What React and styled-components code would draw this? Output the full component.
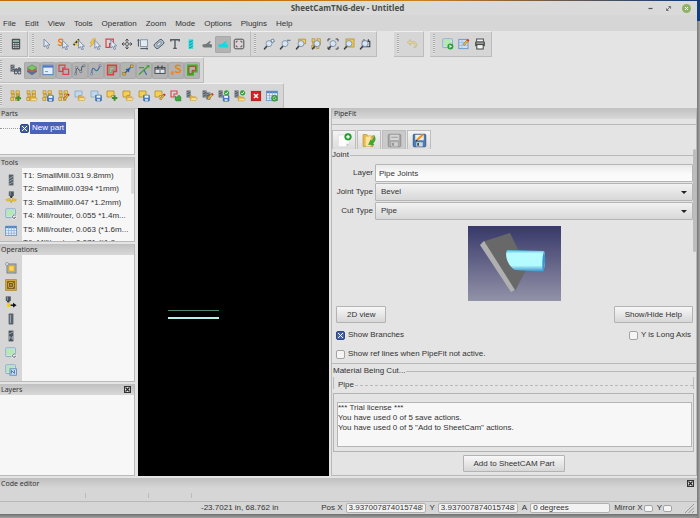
import React from "react";
import styled, { createGlobalStyle, css } from "styled-components";

const Global = createGlobalStyle`
  * { box-sizing: border-box; }
  html, body { margin: 0; height: 100%; overflow: hidden; }
  body { background: #858585; color: #333; font: 8px/10px "Liberation Sans", Arial, sans-serif; }
  button, input, select, textarea { font: inherit; color: inherit; margin: 0; }
  h1, h2, ul, p, fieldset { margin: 0; padding: 0; font: inherit; }
`;

/* ---------- icon pieces, drawn on a 12 x 12 grid ---------- */

const Cursor = ({ x = 0, y = 0 }) => (
  <path transform={`translate(${x} ${y})`} d="M3 1v8l2-1.6L6.3 10.6l1.5-.7L6.4 7h2.5z" fill="#dfe8f3" stroke="#6d7f9c" strokeWidth=".8" />
);
const Lens = () => (
  <g>
    <path d="M4 8L1.6 10.8" stroke="#3c4654" strokeWidth="1.7" strokeLinecap="round" />
    <circle cx="6" cy="5.6" r="3" fill="#d6e5f1" stroke="#7f90a3" strokeWidth=".9" />
  </g>
);
const Folder = ({ x = 0, y = 0 }) => (
  <g transform={`translate(${x} ${y})`}>
    <path d="M.5 5V1h2l.8 1H6v3z" fill="#e8b93f" stroke="#b48a26" strokeWidth=".5" />
    <path d="M.5 5.6L1.8 3H7.6L6.4 5.6z" fill="#ffe391" stroke="#c4982e" strokeWidth=".5" />
  </g>
);
const Disk = ({ x = 0, y = 0 }) => (
  <g transform={`translate(${x} ${y})`}>
    <rect x=".4" y=".4" width="5.8" height="5.8" rx=".6" fill="#4380cc" stroke="#2c5d9a" strokeWidth=".6" />
    <rect x="1.4" y=".7" width="3.8" height="2.2" fill="#f1f5fa" />
    <rect x="1.9" y="4.1" width="2.8" height="2" fill="#cfd8e2" />
  </g>
);
const Pencil = ({ x = 0, y = 0 }) => (
  <g transform={`translate(${x} ${y})`}>
    <path d="M1 6L5.4 1" stroke="#8a6a24" strokeWidth="2.2" />
    <path d="M1.2 5.8L5 1.5" stroke="#f3b53c" strokeWidth="1.4" />
    <path d="M5 1.8L6 .6" stroke="#cf2929" strokeWidth="2" />
  </g>
);
const Plus = ({ x = 0, y = 0, c = "#3f8f28" }) => (
  <path transform={`translate(${x} ${y})`} d="M3 .3v5.4M.3 3h5.4" stroke={c} strokeWidth="2" />
);
const Blocks = ({ c = "#f0c750", s = "#a98734" }) => (
  <g fill={c} stroke={s} strokeWidth=".6">
    <rect x="1" y=".8" width="3" height="3" /><rect x="6" y=".8" width="3.4" height="3" />
    <rect x="1.8" y="4.4" width="3" height="2.6" /><rect x="6.4" y="4.4" width="3" height="2.6" />
    <rect x=".8" y="7.6" width="3" height="3" /><rect x="5.4" y="7.6" width="2.6" height="3" />
  </g>
);
const Part = ({ x = 0, y = 0, c = "#f5cf52", s = "#b38c30" }) => (
  <path transform={`translate(${x} ${y})`} d="M1 1h7v4.5H5.5V7H1z" fill={c} stroke={s} strokeWidth=".8" />
);
const Drill = ({ x = 0, y = 0 }) => (
  <g transform={`translate(${x} ${y})`}>
    <rect x="1" y=".5" width="4" height="7" fill="#59616a" />
    <path d="M1 3l4-2M1 5.5l4-2M1.4 7.6l3.4-1.8" stroke="#a4abb2" strokeWidth=".7" />
  </g>
);
const Check = ({ x = 0, y = 0 }) => (
  <g transform={`translate(${x} ${y})`}>
    <circle cx="2.6" cy="2.6" r="2.6" fill="#31a038" />
    <path d="M1.2 2.6l1.1 1.2L4.2 1.3" fill="none" stroke="#fff" strokeWidth=".9" />
  </g>
);
const Shape = ({ c = "#d8434b" }) => <path d="M1 1.2h7.4v4.4H4.6v3.8H1z" fill="none" stroke={c} strokeWidth="1.2" />;
const Sheet = () => (
  <g>
    <rect x=".8" y=".8" width="9.6" height="8.8" rx=".6" fill="#d5e7f4" stroke="#8aacc4" />
    <rect x="2" y="2" width="7" height="6.4" fill="#b4eab2" />
  </g>
);
const Table = () => (
  <g>
    <rect x=".6" y="1.2" width="10.8" height="9.4" fill="#e8f1fb" stroke="#5d8fc4" strokeWidth=".8" />
    <path d="M.6 2.2h10.8" stroke="#4a83c2" strokeWidth="2" />
    <path d="M.6 5.6h10.8M.6 8.2h10.8M3.6 2v8.6M6.4 2v8.6M9 2v8.6" stroke="#7fa9d6" strokeWidth=".7" />
  </g>
);

const art = {
  calc: <g><rect x="1.8" y=".8" width="8.4" height="10.6" rx=".8" fill="#4c5358" /><rect x="3" y="2" width="6" height="2" fill="#8fb09c" /><path d="M3 5.6h6M3 7.5h6M3 9.4h6" stroke="#c3cac9" strokeWidth="1.1" strokeDasharray="1.5 .7" /></g>,
  cursor: <Cursor />,
  snap: <g><path d="M6 2C4.6.6 1.4 1 1.6 2.9 1.8 4.8 5.4 3.9 5.3 6 5.2 7.8 2 7.8 1 6.4" fill="none" stroke="#f08018" strokeWidth="1.5" /><Cursor x={2.6} y={1.3} /></g>,
  measure: <g><path d="M.6 7L6 1.4" stroke="#3b3b36" strokeWidth="2" /><path d="M1.4 4.8l4 3M4 2.2l3.4 3" stroke="#ecc73c" strokeWidth="1.5" /><Cursor x={2.6} y={1.3} /></g>,
  bolt: <g><path d="M4 .8L1 5h2L1 9l5-5H3.8L7 .8z" fill="#f7cf45" stroke="#c89020" strokeWidth=".5" /><Cursor x={2.8} y={1.3} /></g>,
  shapeCursor: <g><Shape /><Cursor x={2.8} y={1} /></g>,
  move: <g stroke="#4b4f54" fill="none"><path d="M6 1.2v9.6M1.2 6h9.6" /><path d="M4.4 2.6L6 1l1.6 1.6M4.4 9.4L6 11l1.6-1.6M2.6 4.4L1 6l1.6 1.6M9.4 4.4L11 6 9.4 7.6" /><rect x="4.8" y="4.8" width="2.4" height="2.4" fill="#eee" strokeWidth=".7" /></g>,
  scale: <g><rect x="3.4" y="1.8" width="7.2" height="6.6" fill="#e3eaf1" stroke="#72869b" strokeWidth=".8" /><path d="M1.4 1.5v7M3.4 10.6h7.4" stroke="#43515f" strokeWidth="1" /><path d="M.4 2.6l1-1.4 1 1.4M9.6 9.6l1.4 1-1.4 1" fill="none" stroke="#43515f" strokeWidth=".8" /></g>,
  rotate: <g transform="rotate(-40 6 6)"><rect x="1" y="3.2" width="10" height="5.6" rx="1.8" fill="#aebfce" stroke="#4f5b66" strokeWidth=".9" /><rect x="3.4" y="4.9" width="5.2" height="2.2" rx="1" fill="#eff3f6" stroke="#56636f" strokeWidth=".7" /></g>,
  text: <path d="M1.8 3.6V1.8h8.4v1.8M6 1.8v8.6M4.2 10.4h3.6" fill="none" stroke="#555a60" strokeWidth="1.4" />,
  cyanTool: <g><rect x="3.6" y="1.4" width="4.6" height="9.4" fill="#21dfe2" /><path d="M4 4.6l3.6-2M4 7.4l3.6-2M4 10.2l3.6-2" stroke="#167b88" strokeWidth=".8" /></g>,
  hand: <path d="M1 7.4c1-1.4 2.8-1.200 4.400-1.600L8.600 3l1.400.8-1.800 2 2.800.6v3H2.600z" fill="#747a7b" />,
  cyanHand: <path d="M1 7.4c1-1.4 2.8-1.200 4.400-1.600L8.600 3l1.400.8-1.800 2 2.800.6v3H2.600z" fill="#0fdbe4" />,
  frame: <g fill="none" stroke="#4c4c4c"><rect x="1.2" y="1.2" width="9.6" height="9.6" rx="1.6" /><path d="M3.2 4.8V3.2h1.6M7.2 3.2h1.6v1.6M8.8 7.2v1.6H7.2M4.8 8.8H3.2V7.2" strokeWidth=".8" /></g>,
  zoomIn: <g><Lens /><circle cx="9.6" cy="2.8" r="1.6" fill="#e6edf3" stroke="#566f88" strokeWidth=".9" /></g>,
  zoomOut: <g><Lens /><path d="M8 2.4h3.4" stroke="#6b8298" strokeWidth="1.4" /></g>,
  zoomPart: <g><Part x={2.6} y={.2} /><Lens /></g>,
  zoomParts: <g><Blocks /><Lens /></g>,
  zoomFit: <g><path d="M1 3.4V1h2.4M8.6 1H11v2.4M11 8.6V11H8.6M3.4 11H1V8.6" fill="none" stroke="#444" /><Lens /></g>,
  zoomSheet: <g><rect x="3" y="1" width="8" height="8" fill="#f5cb43" stroke="#b38f36" strokeWidth=".8" /><Lens /></g>,
  zoomMachine: <g><path d="M3.4 3.4h7.4v5.4H3.4zM5 3V1.2M9.4 3V1.2" fill="#cdd5da" stroke="#38424b" strokeWidth="1.1" /><Lens /></g>,
  undo: <path d="M4.4 1.6L1.2 4.4 4.4 7.2V5.4c3-.2 4.6 0 4.8 2.2.1 1-.5 1.6-1.6 2 2 .2 3.6-.8 3.4-2.8C10.7 3.9 7.8 3.3 4.4 3.4z" fill="#dfd3a0" stroke="#c2b47c" strokeWidth=".6" />,
  run: <g><Sheet /><circle cx="8.4" cy="8.4" r="3" fill="#27a338" /><path d="M7.5 6.8v3.2l2.5-1.6z" fill="#fff" /></g>,
  editSheet: <g><rect x=".8" y="1.4" width="9.2" height="9.2" fill="#cfe0f3" stroke="#6f99c8" /><path d="M1 4.4h9M1 7.4h9M4 1.5v9" stroke="#98b8dc" strokeWidth=".7" /><Pencil x={4.6} y={1} /></g>,
  print: <g><rect x="2.6" y="1" width="6.8" height="3" fill="#f4f4f4" stroke="#4b5350" /><rect x="1" y="3.6" width="10" height="4.6" rx=".6" fill="#59605c" /><rect x="2.8" y="6.6" width="6.4" height="4.4" fill="#f3f6f1" stroke="#3c4440" /><path d="M2.6 5.2h6.8" stroke="#c9cfca" strokeWidth=".8" /></g>,
  binocs: <g><Drill x={-.5} y={.2} /><path d="M4.5 9.5V5.6l2-1 1 1.4 1.2-2.4 2 .8v5.6H8V8H7v2H4.5z" fill="#5e6b78" stroke="#2c343b" strokeWidth=".6" /><circle cx="6" cy="8.6" r="1" fill="#cbd6df" /><circle cx="9.4" cy="8.6" r="1" fill="#cbd6df" /></g>,
  layers: <g stroke="#555" strokeWidth=".4"><path d="M6 5l5 2.6-5 3.4L1 7.6z" fill="#4777c6" /><path d="M6 3.4L11 6 6 9 1 6z" fill="#dc5550" /><path d="M6 .8l5 3-5 3-5-3z" fill="#6fce5c" /></g>,
  window: <g><rect x=".9" y="1.2" width="10.2" height="9.4" fill="#e3eefb" stroke="#5583c0" /><path d="M1 2.6h10" stroke="#467cc5" strokeWidth="2" /><path d="M3 7.6h3" stroke="#7497c4" /></g>,
  twoShapes: <g fill="none" stroke="#d8434b" strokeWidth="1.2"><path d="M1 1.2h6v3H4.6v3.2H1z" /><rect x="5" y="5.2" width="5.6" height="5.2" /></g>,
  nodes: <g><path d="M1.6 10l1-6.4 4.4 4 1-5.2 2.4-.8" fill="none" stroke="#3c4e63" strokeWidth=".9" /><path d="M.8 9h1.8v1.8H.8zM1.800 2.800h1.800v1.800H1.800zM6 6.800h1.800v1.800H6zM9.200.8H11v1.800H9.200z" fill="#eef1f4" stroke="#4a5b6c" strokeWidth=".6" /></g>,
  curve: <g><path d="M1.600 10C2 3 3.400 3.600 5 5.600c2.600 3 3.400-1 5-3.800" fill="none" stroke="#3d68a5" strokeWidth="1.1" /><path d="M.8 9h1.800v1.800H.8zM9.200.8H11v1.800H9.200z" fill="#e4ebf5" stroke="#4c6a92" strokeWidth=".6" /></g>,
  redGreen: <g fill="none"><path d="M1.6 1.4h8.800v6H7.400v3.200H1.600z" stroke="#dd3c40" strokeWidth="1.6" /><path d="M3.6 3.2h4.800v2.400H5.800v3H3.600z" stroke="#5dae55" strokeWidth=".9" /></g>,
  lineNodes: <g><path d="M1.4 10.6L9.6 2.4" stroke="#274f8d" strokeWidth="1.2" /><path d="M3.400 5l4.200-.6-.6 4.200z" fill="#2b57a0" /><rect x="8.4" y="1" width="2.6" height="2.6" fill="#f0c13d" stroke="#86651a" strokeWidth=".6" /><rect x=".8" y="8.6" width="2.4" height="2.4" fill="#f0c13d" stroke="#86651a" strokeWidth=".6" /></g>,
  greenStar: <g><path d="M1 3.600h5M1 10.600L11 1.600" stroke="#3ca72e" strokeWidth="1.4" /><path d="M6 6l2.600 5" stroke="#3669ab" strokeWidth="1.1" /><path d="M8 1.200h3.400v3z" fill="#3ca72e" /></g>,
  machine: <g><rect x="1" y="3.4" width="10" height="6" fill="#e2e6ea" stroke="#3a4147" strokeWidth=".9" /><path d="M1 5h10M4 1.600V5M8 1.600V5" stroke="#3a4147" strokeWidth="1.2" /><path d="M6 5v4" stroke="#66707a" /></g>,
  plusS: <g><path d="M10.600 2.400C9.200.4 5.400 1 5.500 3c.1 2.400 5 1.300 4.900 3.800-.1 2-3.900 2.200-5.200.4" fill="none" stroke="#f08018" strokeWidth="1.5" /><path d="M2.400 7v4M.4 9h4" stroke="#f08018" strokeWidth="1.2" /></g>,
  outlineP: <g fill="none"><path d="M2 1.600h8.600v5.800H7v3.400H2z" stroke="#38b51f" strokeWidth="2" /><path d="M3 2.600h6.600v3.800H6v3.400H3z" stroke="#a63a24" strokeWidth=".8" /></g>,
  blocksAdd: <g><Blocks /><Plus x={5.4} y={5.2} /></g>,
  blocksOpen: <g><Blocks /><Folder x={3.8} y={5.2} /></g>,
  blocksSave: <g><Blocks /><Disk x={5.2} y={5} /></g>,
  blocksEdit: <g><Blocks /><Pencil x={5} y={3.6} /></g>,
  blueOpen: <g><Part c="#c3d7ec" s="#86a6c8" /><Folder x={3.8} y={4.8} /></g>,
  blueSave: <g><Part c="#c3d7ec" s="#86a6c8" /><Disk x={5.2} y={4.8} /></g>,
  partAdd: <g><Part /><Plus x={5.6} y={5} /></g>,
  partOpen: <g><Part /><Folder x={3.8} y={4.8} /></g>,
  partSave: <g><Part /><Disk x={5.2} y={4.8} /></g>,
  partEdit: <g><Part /><Pencil x={5} y={3.6} /></g>,
  shapeImport: <g><path d="M1 1h6v3H4v3H1z" fill="none" stroke="#d8434b" strokeWidth="1.1" /><path d="M5 9.400V6l1.600 1L9 5l2 2v4H6z" fill="#41a744" stroke="#24742a" strokeWidth=".4" /></g>,
  drillOpen: <g><Drill x={-.4} /><Folder x={3.6} y={4.8} /></g>,
  drillEdit: <g><Drill x={-.4} /><Drill x={3.4} y={2} /><Pencil x={5} y={3} /></g>,
  drillSave: <g><Drill x={-.4} /><Disk x={4.8} y={5} /><Check x={6} y={.2} /></g>,
  drillCheck: <g><Drill x={-.4} /><Folder x={3.6} y={5.2} /><Check x={6} y={.2} /></g>,
  redX: <g><rect x="1.2" y="1.2" width="9.6" height="9.6" fill="#d61e24" stroke="#901014" strokeWidth=".6" /><path d="M4 4l4 4M8 4L4 8" stroke="#fff" strokeWidth="1.5" /></g>,
  tableRefresh: <g><Table /><circle cx="8.4" cy="8.2" r="3.2" fill="#38963b" /><path d="M6.800 8.400a1.700 1.700 0 0 1 3-1M10 8a1.700 1.700 0 0 1-3 1" fill="none" stroke="#d7f3d2" strokeWidth=".7" /></g>,
  mill: <g><rect x="3.8" y=".6" width="4.6" height="10.8" fill="#535e69" /><path d="M4 4.600l4-2.200M4 7.400l4-2.200M4 10.200l4-2.200" stroke="#a9b2ba" strokeWidth=".8" /></g>,
  slotMill: <g><rect x="3.6" y=".6" width="4.8" height="10.8" rx=".6" fill="#59646f" /><path d="M5.400 2v8" stroke="#a9b4be" strokeWidth=".9" /></g>,
  plasma: <g><rect x="3.8" y=".4" width="5" height="4.6" fill="#4b545e" /><path d="M5.200.6v4" stroke="#9aa6b1" strokeWidth=".8" /><path d="M4.800 5h3l-.8 2h-1.400z" fill="#2e353c" /><path d="M.8 8.800c1.600-1.400 3-.4 4-1.800l1.400 4.600L7.600 7c1 1.400 2.600.4 4 1.800-1.600 2.400-3 1.400-3.400.6L6.200 11.600 4.400 9.400c-.6 1-2.400 1.200-3.600-.6z" fill="#f2c41b" stroke="#c3920f" strokeWidth=".4" /></g>,
  sheetG: <g><Sheet /><circle cx="9" cy="8.8" r="2.6" fill="#f2f2f2" /><path d="M10.600 7.800a1.700 1.700 0 1 0 .1 1.600H9.400" fill="none" stroke="#59636d" strokeWidth=".9" /></g>,
  table: <Table />,
  pocketNode: <g><rect x="2" y="2" width="9" height="9" fill="#b5b8bd" stroke="#7b8088" /><rect x="3.8" y="3.8" width="5.4" height="5.4" fill="#ffd656" stroke="#cf9a1c" strokeWidth=".8" /><circle cx="2" cy="2" r="1.5" fill="#e7eaed" stroke="#7b8490" strokeWidth=".7" /></g>,
  pocket: <g><rect x=".6" y=".6" width="10.8" height="10.8" fill="#d2a83a" stroke="#b08c36" strokeWidth=".8" /><rect x="2.6" y="2.6" width="6.8" height="6.8" fill="none" stroke="#6f5c25" strokeWidth=".9" /><rect x="4.6" y="4.6" width="2.8" height="2.8" fill="#a88a36" stroke="#55471d" strokeWidth=".7" /><path d="M2.600 2.600l2 2M9.400 2.600l-2 2M9.400 9.400l-2-2M2.600 9.400l2-2" stroke="#6f5c25" strokeWidth=".7" /></g>,
  plasmaMove: <g><rect x=".8" y=".4" width="5" height="4.6" fill="#4b545e" /><path d="M2.400.6v4" stroke="#9aa6b1" strokeWidth=".8" /><path d="M1.800 5h3l-.6 1.600H2.400z" fill="#2e353c" /><rect x="2.2" y="7" width="3" height="4" fill="#f1cf14" /><path d="M5.600 9.200h3" stroke="#111" strokeWidth="1.4" /><path d="M8 6.800l3.600 2.400L8 11.600z" fill="#111" /></g>,
  drillN: <g><rect x="3.6" y=".6" width="4.8" height="10.8" fill="#4a545e" /><path d="M4 4l4-2M4.600 9.600V6.400l3 2.800V6" fill="none" stroke="#b5bdc4" strokeWidth=".8" /></g>,
  sheetCopy: <g><Sheet /><rect x="5" y="4.8" width="6.4" height="6.4" fill="#c6ddf2" stroke="#5583bb" strokeWidth=".8" /><path d="M6.400 9.600V6.400l3 3V6.200" fill="none" stroke="#2e5ea0" strokeWidth=".8" /></g>,
  newJob: <g><path d="M1 1.600h6.400L10 6v2.600L7.600 11H1z" fill="#fcfcfc" stroke="#d5d5d5" strokeWidth=".5" /><path d="M7.600 11V8.600H10z" fill="#c8c8c8" /><circle cx="8.8" cy="3" r="2.7" fill="#21a72c" stroke="#138219" strokeWidth=".4" /><path d="M8.800 1.500v3M7.300 3h3" stroke="#fff" strokeWidth="1" /></g>,
  openJob: <g><path d="M.8 1.200h3l1 1.200h4v8.400H.8z" fill="#e8bb52" stroke="#b98c2f" strokeWidth=".5" /><path d="M3 10.800V3.200l4-.8v8.400z" fill="#fbe4a0" /><path d="M9.400 1.600c1.800 2.400 1.600 5-.8 6.600l.8 1.400-4.200-.4L7 5.400l.8 1.200c1.400-1.200 1.800-2.800 1.600-5z" fill="#3cb02d" stroke="#227a1b" strokeWidth=".3" /></g>,
  saveOff: <g><rect x="1" y="1" width="10" height="10" rx=".8" fill="#ababab" stroke="#8b8b8b" strokeWidth=".7" /><rect x="2.6" y="1.4" width="6.8" height="4.2" fill="#d6d6d6" /><path d="M3.400 3.400h5.200" stroke="#9b9b9b" strokeWidth=".8" /><rect x="3.4" y="7.4" width="5.2" height="3.4" fill="#cfcfcf" /><rect x="4.2" y="8" width="1.4" height="2.2" fill="#8f8f8f" /></g>,
  saveAs: <g><rect x="1" y="1" width="10" height="10" rx=".8" fill="#4a7db8" stroke="#2c5485" strokeWidth=".7" /><rect x="2.6" y="1.4" width="6.8" height="4.4" fill="#f5efe2" /><rect x="3.4" y="7.4" width="5.2" height="3.4" fill="#d3d8dc" /><rect x="4.2" y="8" width="1.4" height="2.2" fill="#3d4e60" /><path d="M4 5.600l4.800-4.400" stroke="#ef8e24" strokeWidth="1.7" /><path d="M3.200 6.400l1-.8" stroke="#333" strokeWidth="1" /></g>,
};

const Svg = styled.svg`
  display: block;
  flex: none;
  width: ${(p) => p.$size || 12}px;
  height: ${(p) => p.$size || 12}px;
`;
const Icon = ({ name, size }) => <Svg viewBox="0 0 12 12" $size={size} aria-hidden="true">{art[name]}</Svg>;

/* ---------- window frame ---------- */

const Desktop = styled.div`
  height: 100vh;
  padding: 1px 3px 4px 0;
  display: flex;
  background:
    linear-gradient(90deg, #bf6d10 0 30%, #c88124 60%, #85603e 75%, #3c4c66 90%, #0d3a75) 0 0 / 100% 1px no-repeat,
    linear-gradient(#0f3f7c, #0f3f7c) 100% 0 / 3px 21px no-repeat,
    linear-gradient(90deg, #777, #a4a4a4) 100% 0 / 3px 100% no-repeat,
    linear-gradient(#6e6e6e, #a2a2a2) 0 100% / 100% 4px no-repeat;
`;
const Window = styled.div`
  flex: 1;
  min-width: 0;
  display: flex;
  flex-direction: column;
  background: #e4e4e4;
`;
const TitleBar = styled.header`
  height: 14px;
  display: grid;
  grid-template-columns: 58px 1fr 60px;
  align-items: center;
  background: #dadada;
`;
const Title = styled.h1`
  grid-column: 2;
  text-align: center;
  font: bold 8px/14px "Noto Sans", sans-serif;
  color: #4c4c4c;
`;
const WindowButtons = styled.div`
  display: flex;
  justify-content: flex-end;
  gap: 9px;
  padding-right: 6px;
`;
const WindowButton = styled.button`
  width: 9px;
  height: 9px;
  padding: 0;
  border: 0;
  border-radius: 50%;
  background: ${(p) => (p.$close ? "#8fb366" : "transparent")};
`;
const MenuBar = styled.nav`
  height: 16px;
  display: flex;
  align-items: center;
  gap: 9px;
  padding: 1px 0 0 3px;
  background: #d6d6d6;
`;
const MenuItem = styled.button`
  padding: 0;
  border: 0;
  background: none;
`;

/* ---------- toolbars ---------- */

const Toolbars = styled.div`
  display: flex;
  flex-direction: column;
  height: 77px;
`;
const ToolbarRow = styled.div`
  height: 26px;
  display: flex;
`;
const Toolbar = styled.div`
  display: flex;
  align-items: center;
  padding-right: 3px;
  height: 26px;
  margin-left: ${(p) => p.$gap || 0}px;
  background: #d6d6d6;
  border: solid #bcbcbc;
  border-width: 0 1px 1px 0;
  border-top: 1px solid #efefef;
`;
const Grip = styled.span`
  width: 2px;
  height: 20px;
  margin: 0 ${(p) => (p.$edge ? 6 : 5)}px 0 ${(p) => (p.$edge ? 0 : 3)}px;
  background: repeating-linear-gradient(#a9a9a9 0 1px, #e6e6e6 1px 2px);
`;
const ToolButton = styled.button`
  width: 16px;
  height: 16px;
  padding: 0;
  border: 0;
  background: none;
  display: grid;
  place-items: center;
  ${(p) => p.$pressed && css`
    height: 17px;
    background: #b3b3b3;
    box-shadow: inset 0 0 0 1px #a8a8a8;
    border-radius: 2px;
  `}
`;

/* ---------- docks ---------- */

const Main = styled.main`
  flex: 1;
  min-height: 0;
  display: grid;
  grid-template-columns: 136px minmax(0, 191fr) minmax(0, 366fr);
  column-gap: 2px;
  padding-bottom: 2px;
`;
const Docks = styled.aside`
  display: flex;
  flex-direction: column;
  gap: 2px;
  min-height: 0;
  padding-right: 1px;
`;
const Dock = styled.section`
  display: flex;
  flex-direction: column;
  min-height: 0;
  flex: ${(p) => (p.$height ? `0 0 ${p.$height}px` : "1")};
  border: solid #b9b9b9;
  border-width: 0 1px 1px 0;
  background: #d6d6d6;
`;
const DockHeader = styled.header`
  height: 11px;
  flex: none;
  display: flex;
  align-items: center;
  justify-content: space-between;
  padding: 0 3px 0 ${(p) => p.$indent || 1}px;
  background: linear-gradient(#c0c0c0, #d8d8d8);
`;
const DockTitle = styled.h2`
  font: 7px/11px "Noto Sans", sans-serif;
`;
const CloseBox = styled.button`
  width: 7px;
  height: 7px;
  padding: 0;
  border: 1px solid #333;
  background: #e6e6e6;
  display: grid;
  place-items: center;
`;
const DockBody = styled.div`
  flex: 1;
  min-height: 0;
  display: flex;
  overflow: hidden;
`;
const SideTools = styled.div`
  width: 22px;
  flex: none;
  display: flex;
  flex-direction: column;
  align-items: center;
  gap: 1px;
  padding-top: ${(p) => p.$top}px;
`;
const White = styled.div`
  flex: 1;
  min-width: 0;
  background: #f7f7f7;
  display: flex;
`;
const TreeRow = styled.div`
  height: 14px;
  margin-top: 2px;
  display: flex;
  align-items: center;
`;
const TreeLine = styled.span`
  width: 20px;
  border-top: 1px dotted #999;
`;
const TreeLabel = styled.span`
  margin-left: 1px;
  padding: 0 2px;
  line-height: 12px;
  background: #4a63b8;
  color: #fff;
`;
const ToolList = styled.ul`
  flex: 1;
  height: 81px;
  margin-top: 1px;
  list-style: none;
  padding-left: 1px;
  display: grid;
  grid-template-rows: repeat(6, 1fr);
  align-items: center;
  white-space: nowrap;
`;
const Thumb = styled.span`
  width: 3px;
  height: ${(p) => p.$height}px;
  flex: none;
  border-radius: 2px;
  background: ${(p) => p.$color || "#dadada"};
`;

const View = styled.div`
  background: #000;
  display: flex;
  flex-direction: column;
  align-items: flex-start;
  padding: 202px 0 0 30px;
  gap: 6px;
`;
const Cut = styled.span`
  width: 51px;
  height: ${(p) => (p.$wide ? 2 : 1)}px;
  background: ${(p) => (p.$wide ? "#b6f0ec" : "#4a8570")};
`;

/* ---------- PipeFit panel ---------- */

const Panel = styled.section`
  display: flex;
  flex-direction: column;
  min-width: 0;
  min-height: 0;
  border: solid #b9b9b9;
  border-width: 0 1px 1px 1px;
`;
const Tabs = styled.div`
  height: 25px;
  margin-top: 5px;
  flex: none;
  border-top: 1px solid #b9b9b9;
  display: flex;
  align-items: flex-end;
  gap: 1px;
`;
const Tab = styled.button`
  width: 24px;
  height: 19px;
  padding: 0;
  display: grid;
  place-items: center;
  border: 1px solid #bdbdbd;
  border-bottom: 0;
  background: ${(p) => (p.disabled ? "#cacaca" : "linear-gradient(#f4f4f4, #dcdcdc)")};
`;
const Scroll = styled.div`
  flex: none;
  height: 215px;
  display: flex;
  border-bottom: 1px solid #b9b9b9;
`;
const Joint = styled.fieldset`
  flex: 1;
  min-width: 0;
  border: 0;
  display: flex;
  flex-direction: column;
`;
const Legend = styled.span`
  display: flex;
  align-items: center;
  height: 12px;
  gap: 1px;
  &::after {
    content: "";
    flex: 1;
    border-top: 1px ${(p) => (p.$dashed ? "dashed" : "solid")} #b9b9b9;
  }
`;
const Fields = styled.div`
  display: grid;
  grid-template-columns: 41px 1fr;
  column-gap: 2px;
  row-gap: 1px;
  align-items: center;
  margin-top: 3px;
`;
const FieldLabel = styled.label`
  text-align: right;
  white-space: nowrap;
`;
const fieldBox = css`
  width: 100%;
  height: 18px;
  border: 1px solid #b5b5b5;
  border-radius: 1px;
  outline: 0;
`;
const TextField = styled.input`
  ${fieldBox}
  padding: 0 3px;
  background: linear-gradient(#eaeaea, #fbfbfb 60%);
`;
const SelectWrap = styled.span`
  display: grid;
  align-items: center;
  > * { grid-area: 1 / 1; }
  > svg { justify-self: end; margin-right: 6px; pointer-events: none; }
`;
const Select = styled.select`
  ${fieldBox}
  appearance: none;
  padding: 0 5px;
  background: linear-gradient(#f2f2f2, #d8d8d8);
`;
const PreviewRow = styled.div`
  display: flex;
  justify-content: center;
  padding: 6px 0 5px 4px;
`;
const Preview = styled.svg`
  display: block;
  width: 93px;
  height: 75px;
`;
const Split = styled.div`
  display: flex;
  justify-content: space-between;
  align-items: center;
  height: ${(p) => p.$height}px;
  padding: 0 ${(p) => p.$right || 0}px 0 4px;
`;
const PushButton = styled.button`
  height: 17px;
  padding: 0 10px;
  border: 1px solid #b3b3b3;
  border-radius: 1px;
  background: linear-gradient(#f7f7f7, #d7d7d7);
  white-space: nowrap;
`;
const CheckLabel = styled.label`
  display: flex;
  align-items: center;
  gap: 3px;
`;
const checkedMark = css`
  border-color: #2f4687;
  background:
    linear-gradient(45deg, transparent 42%, #fff 42% 58%, transparent 58%) center / 5px 5px no-repeat,
    linear-gradient(-45deg, transparent 42%, #fff 42% 58%, transparent 58%) center / 5px 5px no-repeat,
    #4661a8;
`;
const CheckBox = styled.input.attrs({ type: "checkbox" })`
  appearance: none;
  width: 9px;
  height: 9px;
  flex: none;
  border: 1px solid #a4a4a4;
  border-radius: 2px;
  background: #f5f5f5;
  &:checked { ${checkedMark} }
`;
const Material = styled.div`
  height: 24px;
  margin-top: 1px;
  padding-left: 1px;
  flex: none;
  overflow: hidden;
`;
const PipeLegend = styled.div`
  padding: 2px 0 0 4px;
  margin: 0 2px 0 0;
  border: solid #b9b9b9;
  border-width: 0 1px;
`;
const Notice = styled.div`
  height: 59px;
  flex: none;
  margin: 4px 2px 3px 1px;
  padding: 8px 1px 4px 3px;
  border: 1px solid #b3b3b3;
`;
const NoticeText = styled.textarea`
  display: block;
  width: 100%;
  height: 100%;
  padding: 0;
  resize: none;
  outline: 0;
  overflow: hidden;
  border: 1px solid #b5b5b5;
  background: #f7f7f7;
`;
const Centered = styled.div`
  display: flex;
  justify-content: center;
`;

/* ---------- bottom ---------- */

const CodeDock = styled.section`
  flex: none;
  height: 24px;
  background: #d6d6d6;
  border-bottom: 1px solid #b9b9b9;
`;
const Ticks = styled.div`
  display: grid;
  grid-template-columns: 86px 63px 43px;
  padding-top: 4px;
`;
const Tick = styled.span`
  height: 5px;
  border-right: 1px solid #bcbcbc;
`;
const StatusBar = styled.footer`
  flex: none;
  height: 12px;
  display: flex;
  align-items: center;
  gap: 4px;
  padding-right: 2px;
  background: #d6d6d6;
`;
const Position = styled.span`
  margin: 0 auto 0 201px;
  white-space: nowrap;
`;
const StatusLabel = styled.label`
  display: flex;
  align-items: center;
  gap: ${(p) => (p.$tight ? 1 : 3)}px;
  white-space: nowrap;
`;
const StatusInput = styled.input`
  width: 80px;
  height: 10px;
  padding: 0 2px;
  border: 1px solid #b0b0b0;
  border-radius: 2px;
  background: #f2f2f2;
`;
const StatusCheck = styled(CheckBox)`
  height: 7px;
`;
const ResizeCorner = styled(Svg)`
  margin-left: 7px;
`;

/* ---------- data ---------- */

const menus = ["File", "Edit", "View", "Tools", "Operation", "Zoom", "Mode", "Options", "Plugins", "Help"];

const topBars = [
  { edge: true, icons: ["calc"] },
  { gap: 1, icons: ["cursor", "snap", "measure", "bolt", "shapeCursor", "move", "scale", "rotate", "text", "cyanTool", "hand", "cyanHand", "frame"], pressed: ["cyanHand"] },
  { icons: ["zoomIn", "zoomOut", "zoomPart", "zoomParts", "zoomFit", "zoomSheet", "zoomMachine"] },
  { gap: 17, icons: ["undo"] },
  { gap: 6, icons: ["run", "editSheet", "print"] },
];
const viewIcons = ["layers", "window", "twoShapes", "nodes", "curve", "redGreen", "lineNodes", "greenStar", "machine", "plusS", "outlineP"];
const fileIcons = ["blocksAdd", "blocksOpen", "blocksSave", "blocksEdit", "blueOpen", "blueSave", "partAdd", "partOpen", "partSave", "partEdit", "shapeImport", "drillOpen", "drillEdit", "drillSave", "drillCheck", "redX", "tableRefresh"];

const tools = [
  "T1: SmallMill.031 9.8mm)",
  "T2: SmallMill0.0394 *1mm)",
  "T3: SmallMill0.047 *1.2mm)",
  "T4: Mill/router, 0.055 *1.4m...",
  "T5: Mill/router, 0.063 (*1.6m...",
  "T6: Mill/router, 0.071 (*1.8m...",
];

const notice = `*** Trial license ***
You have used 0 of 5 save actions.
You have used 0 of 5 "Add to SheetCam" actions.`;

const Bar = ({ icons, pressed = [], edge, gap }) => (
  <Toolbar $gap={gap} role="toolbar">
    <Grip $edge={edge} />
    {icons.map((name) => (
      <ToolButton key={name} aria-label={name} $pressed={pressed.includes(name)}>
        <Icon name={name} />
      </ToolButton>
    ))}
  </Toolbar>
);

const Header = ({ title, closable, indent }) => (
  <DockHeader $indent={indent}>
    <DockTitle>{title}</DockTitle>
    {closable && (
      <CloseBox aria-label={`Close ${title}`}>
        <Svg viewBox="0 0 5 5" $size={5}><path d="M.5.5l4 4M4.5.5l-4 4" stroke="#222" strokeWidth="1.2" /></Svg>
      </CloseBox>
    )}
  </DockHeader>
);

const SideBar = ({ names, top }) => (
  <SideTools $top={top}>
    {names.map((name) => (
      <ToolButton key={name} aria-label={name}><Icon name={name} /></ToolButton>
    ))}
  </SideTools>
);

const DropDown = ({ id, label, value }) => (
  <>
    <FieldLabel htmlFor={id}>{label}</FieldLabel>
    <SelectWrap>
      <Select id={id} defaultValue={value}><option>{value}</option></Select>
      <Svg viewBox="0 0 6 6" $size={6}><path d="M0 2h6L3 5z" fill="#222" /></Svg>
    </SelectWrap>
  </>
);

export default function App() {
  return (
    <Desktop>
      <Global />
      <Window>
        <TitleBar>
          <Title>SheetCamTNG-dev - Untitled</Title>
          <WindowButtons>
            <WindowButton aria-label="Minimize"><Svg viewBox="0 0 9 9" $size={9}><path d="M2.5 4.5h4" stroke="#555" strokeWidth="1.2" /></Svg></WindowButton>
            <WindowButton aria-label="Restore"><Svg viewBox="0 0 9 9" $size={9}><path d="M4.4 2.5h2.2v2.2M4.6 6.5H2.5V4.4M2.8 6.2l3.5-3.5" fill="none" stroke="#666" strokeWidth=".9" /></Svg></WindowButton>
            <WindowButton aria-label="Close" $close><Svg viewBox="0 0 9 9" $size={9}><path d="M3 3l3 3M6 3L3 6" stroke="#fff" /></Svg></WindowButton>
          </WindowButtons>
        </TitleBar>
        <MenuBar>{menus.map((m) => <MenuItem key={m}>{m}</MenuItem>)}</MenuBar>

        <Toolbars>
          <ToolbarRow>{topBars.map((b) => <Bar key={b.icons[0]} {...b} />)}</ToolbarRow>
          <ToolbarRow><Bar edge icons={["binocs", ...viewIcons]} pressed={viewIcons} /></ToolbarRow>
          <ToolbarRow><Bar edge icons={fileIcons} /></ToolbarRow>
        </Toolbars>

        <Main>
          <Docks>
            <Dock $height={47}>
              <Header title="Parts" />
              <DockBody>
                <White>
                  <TreeRow>
                    <TreeLine />
                    <CheckBox defaultChecked id="part" aria-label="New part" />
                    <TreeLabel>New part</TreeLabel>
                  </TreeRow>
                </White>
              </DockBody>
            </Dock>
            <Dock $height={85}>
              <Header title="Tools" />
              <DockBody>
                <SideBar names={["mill", "plasma", "sheetG", "table"]} top={4} />
                <White>
                  <ToolList>{tools.map((t) => <li key={t}>{t}</li>)}</ToolList>
                  <Thumb $height={26} />
                </White>
              </DockBody>
            </Dock>
            <Dock $height={138}>
              <Header title="Operations" />
              <DockBody>
                <SideBar names={["pocketNode", "pocket", "plasmaMove", "slotMill", "drillN", "sheetG", "sheetCopy"]} top={5} />
                <White />
              </DockBody>
            </Dock>
            <Dock>
              <Header title="Layers" closable />
              <DockBody><White /></DockBody>
            </Dock>
          </Docks>

          <View>
            <Cut />
            <Cut $wide />
          </View>

          <Panel>
            <Header title="PipeFit" indent={2} />
            <Tabs>
              <Tab aria-label="New"><Icon name="newJob" size={15} /></Tab>
              <Tab aria-label="Open"><Icon name="openJob" size={15} /></Tab>
              <Tab aria-label="Save" disabled><Icon name="saveOff" size={15} /></Tab>
              <Tab aria-label="Save as"><Icon name="saveAs" size={15} /></Tab>
            </Tabs>
            <Scroll>
              <Joint>
                <Legend>Joint</Legend>
                <Fields>
                  <FieldLabel htmlFor="layer">Layer</FieldLabel>
                  <TextField id="layer" defaultValue="Pipe Joints" />
                  <DropDown id="joint" label="Joint Type" value="Bevel" />
                  <DropDown id="cut" label="Cut Type" value="Pipe" />
                </Fields>
                <PreviewRow>
                  <Preview viewBox="0 0 93 75" role="img" aria-label="Pipe joint">
                    <defs>
                      <linearGradient id="sky" x2="0" y2="1"><stop stopColor="#38386a" /><stop offset="1" stopColor="#9292a8" /></linearGradient>
                      <linearGradient id="tube" x2="0" y2="1"><stop stopColor="#3fb4dc" /><stop offset=".15" stopColor="#b4fdff" /><stop offset=".7" stopColor="#b4faff" /><stop offset="1" stopColor="#2e86c8" /></linearGradient>
                    </defs>
                    <rect width="93" height="75" fill="url(#sky)" />
                    <path d="M14 16L42 7 59 42 47 65z" fill="#686868" />
                    <path d="M12 19l4-4 31 49-4 2z" fill="#b0b0b0" />
                    <path d="M39 24l37 1c2 4 1 17-1 21l-28-2c-6-3-11-13-8-20z" fill="url(#tube)" />
                    <path d="M76 25c-2 6-2 16-1 21 2-4 3-17 1-21z" fill="#3b94cf" />
                  </Preview>
                </PreviewRow>
                <Split $height={17}>
                  <PushButton>2D view</PushButton>
                  <PushButton>Show/Hide Help</PushButton>
                </Split>
                <Split $height={24} $right={2}>
                  <CheckLabel><CheckBox defaultChecked />Show Branches</CheckLabel>
                  <CheckLabel><CheckBox />Y is Long Axis</CheckLabel>
                </Split>
                <Split $height={14}>
                  <CheckLabel><CheckBox />Show ref lines when PipeFit not active.</CheckLabel>
                </Split>
              </Joint>
              <Thumb $height={103} $color="#bdbdbd" />
            </Scroll>
            <Material>
              <Legend>Material Being Cut...</Legend>
              <PipeLegend><Legend $dashed>Pipe</Legend></PipeLegend>
            </Material>
            <Notice>
              <NoticeText readOnly aria-label="License" defaultValue={notice} />
            </Notice>
            <Centered><PushButton>Add to SheetCAM Part</PushButton></Centered>
          </Panel>
        </Main>

        <CodeDock>
          <Header title="Code editor" closable />
          <Ticks><Tick /><Tick /><Tick /></Ticks>
        </CodeDock>
        <StatusBar>
          <Position>-23.7021 in, 68.762 in</Position>
          <StatusLabel>Pos X <StatusInput defaultValue="3.937007874015748520" /></StatusLabel>
          <StatusLabel>Y <StatusInput defaultValue="3.937007874015748520" /></StatusLabel>
          <StatusLabel>A <StatusInput defaultValue="0 degrees" /></StatusLabel>
          <StatusLabel $tight>Mirror X <StatusCheck /></StatusLabel>
          <StatusLabel $tight>Y <StatusCheck /></StatusLabel>
          <ResizeCorner viewBox="0 0 12 12"><path d="M2 11l9-9M5.5 11L11 5.5M9 11l2-2" stroke="#999" /></ResizeCorner>
        </StatusBar>
      </Window>
    </Desktop>
  );
}
